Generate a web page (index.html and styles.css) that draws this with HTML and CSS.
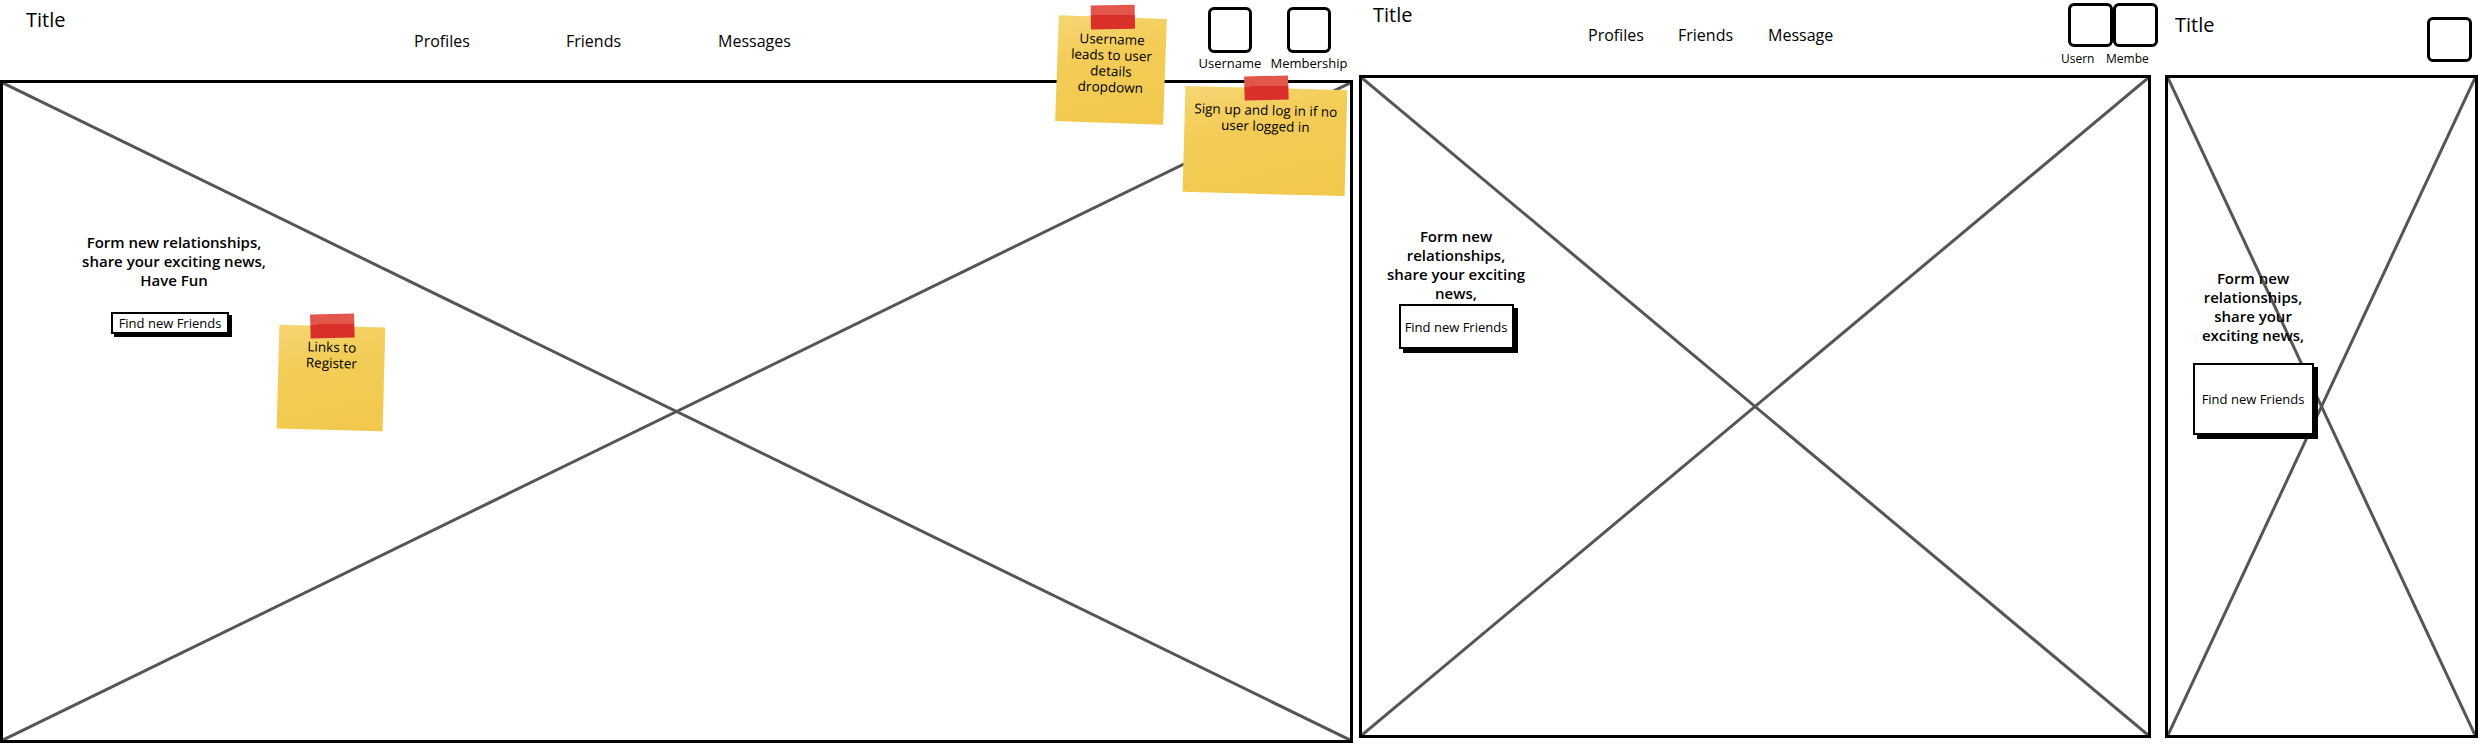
FILE: index.html
```html
<!DOCTYPE html>
<html lang="en">
<head>
  <meta charset="UTF-8">
  <meta name="viewport" content="width=device-width, initial-scale=1.0">
  <title>Social Home Wireframes</title>
  <link rel="stylesheet" href="styles.css">
</head>
<body>
  <div class="board">

    <!-- Desktop -->
    <section class="screen desktop">
      <header class="topbar">
        <div class="title">Title</div>
        <nav class="nav">
          <a>Profiles</a>
          <a>Friends</a>
          <a>Messages</a>
        </nav>
        <div class="account">
          <div class="acct"><div class="avatar"></div><span class="acct-label">Username</span></div>
          <div class="acct"><div class="avatar"></div><span class="acct-label">Membership</span></div>
        </div>
      </header>
      <div class="frame">
        <svg class="placeholder" viewBox="0 0 100 100" preserveAspectRatio="none">
          <line x1="0" y1="0" x2="100" y2="100"/>
          <line x1="0" y1="100" x2="100" y2="0"/>
        </svg>
        <div class="hero">
          <p>Form new relationships,<br>share your exciting news,<br>Have Fun</p>
          <button class="btn">Find new Friends</button>
        </div>
      </div>

      <div class="sticky note-user">Username<br>leads to user<br>details<br>dropdown</div>
      <div class="sticky note-login">Sign up and log in if no<br>user logged in</div>
      <div class="sticky note-register">Links to<br>Register</div>
    </section>

    <!-- Tablet -->
    <section class="screen tablet">
      <header class="topbar">
        <div class="title">Title</div>
        <nav class="nav">
          <a>Profiles</a>
          <a>Friends</a>
          <a>Message</a>
        </nav>
        <div class="account">
          <div class="acct"><div class="avatar"></div><span class="acct-label">Usern</span></div>
          <div class="acct"><div class="avatar"></div><span class="acct-label">Membe</span></div>
        </div>
      </header>
      <div class="frame">
        <svg class="placeholder" viewBox="0 0 100 100" preserveAspectRatio="none">
          <line x1="0" y1="0" x2="100" y2="100"/>
          <line x1="0" y1="100" x2="100" y2="0"/>
        </svg>
        <div class="hero">
          <p>Form new<br>relationships,<br>share your exciting<br>news,</p>
          <button class="btn">Find new Friends</button>
        </div>
      </div>
    </section>

    <!-- Mobile -->
    <section class="screen mobile">
      <header class="topbar">
        <div class="title">Title</div>
        <div class="avatar"></div>
      </header>
      <div class="frame">
        <svg class="placeholder" viewBox="0 0 100 100" preserveAspectRatio="none">
          <line x1="0" y1="0" x2="100" y2="100"/>
          <line x1="0" y1="100" x2="100" y2="0"/>
        </svg>
        <div class="hero">
          <p>Form new<br>relationships,<br>share your<br>exciting news,</p>
          <button class="btn">Find new Friends</button>
        </div>
      </div>
    </section>

  </div>
</body>
</html>
```

FILE: styles.css
```css
body {
  margin: 0;
  font-family: "Open Sans", Arial, sans-serif;
  color: #000;
  background: #fff;
}
.board {
  display: flex;
  width: 2480px;
  height: 745px;
  overflow: hidden;
}
.screen {
  position: relative;
  display: flex;
  flex-direction: column;
  flex: none;
}
.desktop {
  width: 1353px;
}
.tablet {
  width: 792px;
  margin-left: 6px;
}
.mobile {
  width: 313px;
  margin-left: 14px;
}

/* header row */
.topbar {
  display: flex;
  align-items: flex-start;
  flex: none;
}
.desktop .topbar {
  height: 80px;
}
.tablet .topbar,
.mobile .topbar {
  height: 75px;
}
.title {
  flex: none;
  font-size: 20px;
  line-height: 24px;
}
.desktop .title {
  width: 388px;
  margin: 8px 0 0 26px;
}
.tablet .title {
  width: 215px;
  margin: 3px 0 0 14px;
}
.mobile .title {
  margin: 13px 0 0 10px;
}
.nav {
  display: flex;
  font-size: 16px;
  line-height: 20px;
}
.nav a {
  flex: none;
}
.desktop .nav {
  padding-top: 31px;
}
.desktop .nav a {
  width: 152px;
}
.tablet .nav {
  padding-top: 25px;
}
.tablet .nav a {
  width: 90px;
}
.account {
  display: flex;
  margin-left: auto;
}
.desktop .account {
  gap: 9px;
  margin: 7px 9px 0 auto;
}
.tablet .account {
  margin: 3px -7px 0 auto;
}
.acct {
  display: flex;
  flex-direction: column;
  align-items: center;
}
.desktop .acct {
  width: 70px;
}
.tablet .acct {
  width: 45px;
  align-items: flex-start;
}
.avatar {
  flex: none;
  box-sizing: border-box;
  width: 44px;
  height: 46px;
  border: 3px solid #000;
  border-radius: 6px;
}
.tablet .avatar {
  width: 45px;
  height: 44px;
}
.mobile .avatar {
  width: 45px;
  height: 45px;
  margin: 17px 6px 0 auto;
}
.acct-label {
  white-space: nowrap;
  font-size: 13px;
  line-height: 16px;
  margin-top: 2px;
}
.tablet .acct-label {
  font-size: 12px;
  line-height: 14px;
  margin: 5px 0 0 -7px;
}

/* image placeholder frame */
.frame {
  position: relative;
  flex: none;
  box-sizing: border-box;
  height: 663px;
  border: 3px solid #000;
}
.placeholder {
  position: absolute;
  top: 0;
  left: 0;
  width: 100%;
  height: 100%;
}
.placeholder line {
  stroke: #555;
  stroke-width: 3;
  vector-effect: non-scaling-stroke;
}
.hero {
  position: relative;
  display: flex;
  flex-direction: column;
  align-items: center;
  text-align: center;
}
.hero p {
  margin: 0;
  font-size: 15px;
  line-height: 19px;
  font-weight: 600;
}
.desktop .hero {
  width: 342px;
  padding-top: 150px;
}
.tablet .hero {
  width: 188px;
  padding-top: 149px;
}
.mobile .hero {
  width: 170px;
  padding-top: 191px;
}
.btn {
  box-sizing: border-box;
  padding: 0;
  font-family: inherit;
  font-size: 13px;
  color: #000;
  background: #fff;
  border: 2px solid #000;
  box-shadow: 3px 3px 0 #000;
}
.desktop .btn {
  width: 118px;
  height: 22px;
  margin: 22px 8px 0 0;
}
.tablet .btn {
  width: 115px;
  height: 45px;
  margin-top: 1px;
  box-shadow: 4px 4px 0 #000;
}
.mobile .btn {
  width: 121px;
  height: 72px;
  margin-top: 18px;
  box-shadow: 4px 4px 0 #000;
}

/* sticky notes */
.sticky {
  position: absolute;
  box-sizing: border-box;
  font-size: 13.5px;
  line-height: 16px;
  text-align: center;
  background: linear-gradient(165deg, #f6d675 0%, #f3cd58 35%, #f1c84b 100%);
}
.sticky::before {
  content: "";
  position: absolute;
  top: -12px;
  left: 50%;
  width: 44px;
  height: 24px;
  margin-left: -22px;
  background: linear-gradient(#e2564c 0, #e2564c 42%, #d9302a 42%, #d9302a 100%);
  transform: rotate(-3deg);
}
.note-user {
  left: 1057px;
  top: 17px;
  width: 108px;
  height: 106px;
  padding-top: 14px;
  transform: rotate(2deg);
}
.note-login {
  left: 1184px;
  top: 88px;
  width: 162px;
  height: 106px;
  padding-top: 14px;
  transform: rotate(1.5deg);
}
.note-register {
  left: 278px;
  top: 326px;
  width: 106px;
  height: 104px;
  padding-top: 13px;
  transform: rotate(1.5deg);
}
```
